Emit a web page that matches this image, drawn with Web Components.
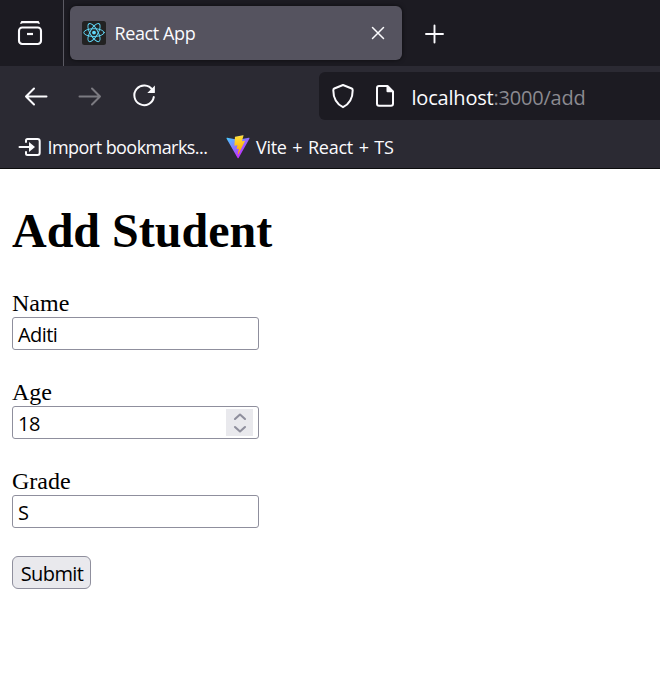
<!DOCTYPE html>
<html lang="en">
<head>
<meta charset="utf-8">
<title>React App</title>
<style>
html,body{margin:0;height:100%;overflow:hidden;background:#fff}
</style>
</head>
<body>
<browser-window></browser-window>
<script>
const define = (name, html) => customElements.define(name, class extends HTMLElement {
  constructor() {
    super();
    const t = document.createElement('template');
    t.innerHTML = html;
    this.attachShadow({mode: 'open'}).append(t.content.cloneNode(true));
  }
});

const icons = {
  view: ['0 0 26 26', '<path d="M5 1.1h16" stroke-width="2.1"/><path d="M4 2.2Q4.6 1.1 5.6 1.1M22 2.2Q21.400 1.1 20.400 1.1" stroke-width="1.6"/><rect x="2" y="6.500" width="22" height="16.500" rx="3.200" stroke-width="2.1"/><path d="M10 13h6" stroke-width="2.200" stroke-linecap="butt"/>'],
  react: ['0 0 24 24', '<rect width="24" height="24" rx="2.500" fill="#222" stroke="none"/><g stroke="#61dafb" stroke-width=".95"><ellipse cx="12" cy="11.600" rx="10.200" ry="3.900"/><ellipse cx="12" cy="11.600" rx="10.200" ry="3.900" transform="rotate(60 12 11.600)"/><ellipse cx="12" cy="11.600" rx="10.200" ry="3.900" transform="rotate(120 12 11.600)"/></g><circle cx="12" cy="11.600" r="1.900" fill="#61dafb" stroke="none"/>'],
  close: ['0 0 14 14', '<path d="M1.500 1.500l11 11M12.500 1.500l-11 11" stroke-width="1.500"/>'],
  plus: ['0 0 20 20', '<path d="M10.500 1.500v17M2 10h17" stroke-width="1.900"/>'],
  back: ['0 0 24 20', '<path d="M22.500 10.500H2M10 2.500l-8 8 8 8" stroke-width="2"/>'],
  forward: ['0 0 24 20', '<path d="M1.500 10.500H22M14 2.500l8 8-8 8" stroke-width="2"/>'],
  reload: ['0 0 24 24', '<path d="M20.300 5.900A9.800 9.800 0 1 0 21.800 13" stroke-width="2"/><path d="M22.900 1.500v7q0 .6-.6.6h-7z" fill="currentColor" stroke="none"/>'],
  shield: ['0 0 24 26', '<path d="M12 2L3.300 5.500Q2.300 6 2.300 7.200c0 8 2.600 13.300 9.700 17 7.100-3.700 9.700-9 9.700-17q0-1.200-1-1.700z" stroke-width="2"/>'],
  page: ['0 0 20 24', '<path d="M12.500 2H4Q2 2 2 4v15.800q0 2 2 2h12q2 0 2-2V7.500z" stroke-width="2"/><path d="M11.500 1.500v5.700q0 1 1 1h6z" fill="currentColor" stroke="none"/>'],
  import: ['0 0 24 20', '<path d="M8 5V3.500Q8 2 9.500 2H19.500Q21.700 2 21.700 4.200v11.600q0 2.200-2.200 2.200H9.500Q8 18 8 16.500V15M1.500 10h12" stroke-width="2"/><path d="M11 5l6 5-6 5z" fill="currentColor" stroke="none"/>'],
  vite: ['0 0 410 404', '<defs><linearGradient id="a" x1="6" y1="33" x2="235" y2="344" gradientUnits="userSpaceOnUse"><stop stop-color="#41d1ff"/><stop offset="1" stop-color="#bd34fe"/></linearGradient><linearGradient id="b" x1="194.650" y1="8.818" x2="236.076" y2="292.989" gradientUnits="userSpaceOnUse"><stop stop-color="#ffea83"/><stop offset=".083" stop-color="#ffdd35"/><stop offset="1" stop-color="#ffa800"/></linearGradient></defs><g stroke="none"><path fill="url(#a)" d="M399.641 59.525L215.643 388.545c-3.799 6.793-13.559 6.834-17.415.073L10.582 59.556c-4.201-7.366 2.099-16.306 10.445-14.814l184.195 32.923c1.175.21 2.378.208 3.553-.006l180.343-32.870c8.317-1.516 14.649 7.363 10.523 14.736z"/><path fill="url(#b)" d="M292.965 1.574L156.801 28.255c-2.238.439-3.905 2.334-4.038 4.611l-8.376 141.464c-.197 3.332 2.863 5.918 6.115 5.167l37.910-8.748c3.547-.818 6.752 2.306 6.023 5.873l-11.263 55.153c-.758 3.712 2.727 6.886 6.352 5.785l23.415-7.114c3.630-1.102 7.118 2.081 6.350 5.796l-17.899 86.633c-1.120 5.419 6.088 8.374 9.094 3.728l2.008-3.103L323.447 102.055c1.858-3.707-1.346-7.935-5.418-7.150l-39.022 7.532c-3.667.707-6.787-2.708-5.752-6.296l25.469-88.291c1.036-3.594-2.094-7.012-5.759-6.276z"/></g>'],
  up: ['0 0 14 10', '<path d="M2 7l5-4.500 5 4.500" stroke-width="2.100"/>'],
  down: ['0 0 14 10', '<path d="M2 3l5 4.500 5-4.500" stroke-width="2.100"/>']
};

customElements.define('ui-icon', class extends HTMLElement {
  connectedCallback() {
    if (this.shadowRoot) return;
    const [box, art] = icons[this.getAttribute('name')];
    this.attachShadow({mode: 'open'}).innerHTML =
      `<style>:host{display:block;flex:none}svg{display:block;width:100%;height:100%}</style>
       <svg viewBox="${box}" fill="none" stroke="currentColor" stroke-linecap="round" stroke-linejoin="round">${art}</svg>`;
  }
});

define('tab-strip', `<style>
:host{display:flex;height:66px;background:#1c1b22;align-items:center}
.view{width:63px;height:66px;border-right:1px solid #5b5a63;display:flex;align-items:center;justify-content:center;box-sizing:content-box}
.view ui-icon{width:26px;height:26px;margin:1px 4px 0 0}
.tab{box-sizing:border-box;width:332px;height:54px;margin-left:6px;border-radius:6px;background:#55535f;box-shadow:0 0 4px #0009;display:flex;align-items:center;padding:0 17px 0 12px}
.tab ui-icon[name=react]{width:24px;height:24px}
.t{font-size:18px;letter-spacing:-.4px;margin-left:8.500px;flex:1;white-space:nowrap}
.x{width:14px;height:14px}.p{width:20px;height:20px;margin:2px 0 0 22px}
</style><div class="view"><ui-icon name="view"></ui-icon></div>
<div class="tab"><ui-icon name="react"></ui-icon><span class="t"><slot></slot></span><ui-icon class="x" name="close"></ui-icon></div>
<ui-icon class="p" name="plus"></ui-icon>`);

define('nav-bar', `<style>
:host{display:flex;height:60px;align-items:center;padding-left:24px}
.n{width:24px;height:20px;margin-right:30px}.f{color:#7b7a81}
.r{width:24px;height:24px}
.url{box-sizing:border-box;margin-left:163px;flex:1;height:48px;border-radius:6px 0 0 6px;background:#1c1b22;display:flex;align-items:center;padding-left:12px}
.s{width:24px;height:26px}.g{width:20px;height:24px;margin-left:20px}
.a{font-size:20px;letter-spacing:-.2px;margin-left:16.500px;white-space:nowrap;color:#8b8a90;padding-top:3px}
b{font-weight:400;color:#fbfbfe}
</style><ui-icon class="n" name="back"></ui-icon><ui-icon class="n f" name="forward"></ui-icon><ui-icon class="r" name="reload"></ui-icon>
<div class="url"><ui-icon class="s" name="shield"></ui-icon><ui-icon class="g" name="page"></ui-icon><div class="a"><b><slot name="host"></slot></b><slot name="path"></slot></div></div>`);

define('book-mark', `<style>
:host{display:flex;align-items:center;font-size:18px;white-space:nowrap}
::slotted(ui-icon){width:24px;height:24px}
span{margin-left:5.500px}
</style><slot name="icon"></slot><span><slot></slot></span>`);

define('form-field', `<style>
:host{display:block;height:61px;margin-bottom:28px}
label{display:block;font:24px/28px "Liberation Serif",serif}
.box{box-sizing:border-box;width:247px;height:33px;border:1px solid #8f8f9d;border-radius:3px;display:flex;align-items:center;justify-content:space-between;padding:2px 5px 0 5px;font:20px/30px "Open Sans",sans-serif;letter-spacing:-.55px}
</style><label><slot name="label"></slot></label><div class="box"><span><slot></slot></span><slot name="control"></slot></div>`);

define('number-spinner', `<style>
:host{display:flex;flex-direction:column;align-items:center;justify-content:center;gap:2px;width:27px;height:27px;background:#e9e9ed;color:#8f8f9d;margin-top:-2px}
ui-icon{width:14px;height:10px}
</style><ui-icon name="up"></ui-icon><ui-icon name="down"></ui-icon>`);

define('submit-button', `<style>
:host{display:block;width:79px}
button{display:block;width:79px;height:33px;box-sizing:border-box;padding:2px 0 0 1px;border:1px solid #8f8f9d;border-radius:6px;background:#e9e9ed;color:#000;font:20px/28px "Open Sans",sans-serif;letter-spacing:-.6px}
</style><button><slot></slot></button>`);

define('student-page', `<style>
:host{display:block;padding:34px 12px 0;color:#000;font-family:"Liberation Serif",serif}
h1{font-size:48px;line-height:56px;margin:0 0 30px;white-space:nowrap}
</style><h1>Add Student</h1>
<form-field><span slot="label">Name</span>Aditi</form-field>
<form-field><span slot="label">Age</span>18<number-spinner slot="control"></number-spinner></form-field>
<form-field><span slot="label">Grade</span>S</form-field>
<submit-button>Submit</submit-button>`);

define('browser-window', `<style>
:host{display:block;width:660px;height:683px;overflow:hidden;background:#fff}
header{background:#2b2a33;color:#fbfbfe;font-family:"Open Sans",sans-serif;height:168px;border-bottom:1px solid #0c0c0d}
.marks{display:flex;height:42px;align-items:center;padding-left:18px;gap:19px}
.i{letter-spacing:-.55px}.v{letter-spacing:-.25px;word-spacing:1.200px}
</style><header><tab-strip>React App</tab-strip>
<nav-bar><span slot="host">localhost</span><span slot="path">:3000/add</span></nav-bar>
<div class="marks"><book-mark class="i"><ui-icon slot="icon" name="import"></ui-icon>Import bookmarks...</book-mark><book-mark class="v"><ui-icon slot="icon" name="vite"></ui-icon>Vite + React + TS</book-mark></div></header>
<student-page></student-page>`);
</script>
</body>
</html>
